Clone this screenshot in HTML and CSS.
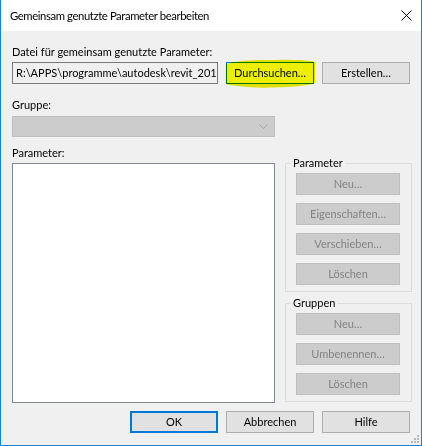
FILE: index.html
```html
<!DOCTYPE html>
<html lang="de">
<head>
<meta charset="utf-8">
<title>Gemeinsam genutzte Parameter bearbeiten</title>
<link rel="stylesheet" href="styles.css">
</head>
<body>
<div class="window">
  <div class="titlebar">
    <span class="title">Gemeinsam genutzte Parameter bearbeiten</span>
    <svg class="close" width="11" height="11" viewBox="0 0 11 11"><path d="M0.5 0.5 L10.5 10.5 M10.5 0.5 L0.5 10.5" stroke="#000" stroke-width="1" fill="none"/></svg>
  </div>
  <div class="content">
    <div class="label l-file">Datei für gemeinsam genutzte Parameter:</div>
    <div class="file-row">
      <div class="field"><span class="field-text">R:\APPS\programme\autodesk\revit_2019</span></div>
      <div class="hl-wrap">
        <button class="btn btn-hl">Durchsuchen…</button>
        <svg class="highlight" width="96" height="30" viewBox="0 0 96 30"><path d="M3 5 C10 2 30 0.5 52 1 C72 0.5 86 1.5 92 3 L92 24 C84 27 66 28 50 28.5 C34 29 20 28 6 26 L3 25 Z" fill="#ecf000"/></svg>
      </div>
      <button class="btn">Erstellen…</button>
    </div>
    <div class="label l-group">Gruppe:</div>
    <div class="combo">
      <svg class="chev" width="9" height="5" viewBox="0 0 9 5"><path d="M0.5 0.5 L4.5 4.5 L8.5 0.5" stroke="#a6a6a6" fill="none"/></svg>
    </div>
    <div class="label l-param">Parameter:</div>
    <div class="main-row">
      <div class="listbox"></div>
      <div class="side">
        <fieldset class="groupbox gb-param">
          <legend>Parameter</legend>
          <button class="btn btn-dis">Neu…</button>
          <button class="btn btn-dis">Eigenschaften…</button>
          <button class="btn btn-dis">Verschieben…</button>
          <button class="btn btn-dis">Löschen</button>
        </fieldset>
        <fieldset class="groupbox gb-groups">
          <legend>Gruppen</legend>
          <button class="btn btn-dis">Neu…</button>
          <button class="btn btn-dis">Umbenennen…</button>
          <button class="btn btn-dis">Löschen</button>
        </fieldset>
      </div>
    </div>
    <div class="footer">
      <button class="btn btn-default">OK</button>
      <button class="btn">Abbrechen</button>
      <button class="btn">Hilfe</button>
    </div>
  </div>
  <svg class="grip" width="9" height="9" viewBox="0 0 9 9">
    <rect x="6" y="0" width="2" height="2" fill="#b8b8b8"/>
    <rect x="3" y="3" width="2" height="2" fill="#b8b8b8"/>
    <rect x="6" y="3" width="2" height="2" fill="#b8b8b8"/>
    <rect x="0" y="6" width="2" height="2" fill="#b8b8b8"/>
    <rect x="3" y="6" width="2" height="2" fill="#b8b8b8"/>
    <rect x="6" y="6" width="2" height="2" fill="#b8b8b8"/>
  </svg>
</div>
</body>
</html>
```
FILE: styles.css
```css
* { box-sizing: border-box; }
html, body { margin: 0; padding: 0; }
body {
  font-family: Lato, "Noto Sans", sans-serif;
  font-size: 11px;
  color: #000;
  background: #f0f0f0;
}
.window {
  position: relative;
  width: 422px;
  height: 446px;
  border: 1px solid #1883d7;
  border-top: none;
  background: #f0f0f0;
  display: flex;
  flex-direction: column;
}
.titlebar {
  height: 31px;
  flex: none;
  background: #fff;
  display: flex;
  align-items: center;
  justify-content: space-between;
  padding: 0 9px 0 9px;
}
.title { font-size: 11.3px; letter-spacing: -0.4px; line-height: 16px; }
.close { display: block; }
.content {
  flex: 1;
  padding: 13px 9px 0 11px;
  display: flex;
  flex-direction: column;
}
.label { line-height: 16px; height: 16px; white-space: nowrap; }
.file-row {
  margin-top: 2px;
  display: flex;
  gap: 8px;
  height: 22px;
}
.field {
  width: 206px;
  flex: none;
  height: 22px;
  border: 1px solid #7a7a7a;
  background: #f0f0f0;
  padding: 0 3px;
  line-height: 20px;
  white-space: nowrap;
  overflow: hidden;
}
.btn {
  font-family: inherit;
  font-size: 11px;
  color: #000;
  width: 88px;
  height: 22px;
  flex: none;
  padding: 0;
  margin: 0;
  border: 1px solid #adadad;
  background: #e1e1e1;
  line-height: 18px;
  text-align: center;
  display: block;
  white-space: nowrap;
}
.hl-wrap { position: relative; width: 88px; height: 22px; flex: none; }
.btn-hl { border-color: #0078d7; background: #ffffff; }
.highlight {
  position: absolute;
  left: -3px;
  top: -3px;
  mix-blend-mode: multiply;
  pointer-events: none;
}
.l-group { margin-top: 13px; }
.combo {
  margin-top: 3px;
  width: 263px;
  height: 21px;
  border: 1px solid #bfbfbf;
  background: #cccccc;
  display: flex;
  align-items: center;
  justify-content: flex-end;
  padding-right: 6px;
}
.chev { display: block; }
.l-param { margin-top: 8px; }
.main-row {
  margin-top: 2px;
  display: flex;
  gap: 10px;
  align-items: flex-start;
}
.listbox {
  width: 263px;
  height: 240px;
  border: 1px solid #828790;
  background: #fff;
}
.side {
  width: 127px;
  margin-top: -8px;
  display: flex;
  flex-direction: column;
  gap: 3px;
}
.groupbox {
  margin: 0;
  padding: 2px 10px 6px 10px;
  border: 1px solid #dcdcdc;
  min-width: 0;
  display: flex;
  flex-direction: column;
  gap: 8px;
}
.groupbox legend {
  padding: 0 2px;
  margin-left: -5px;
  line-height: 16px;
}
.btn-dis {
  width: 104px;
  background: #cccccc;
  border-color: #bfbfbf;
  color: #838383;
}
.footer {
  margin-top: 8px;
  margin-right: 2px;
  display: flex;
  justify-content: flex-end;
  gap: 8px;
}
.btn-default { border: 2px solid #0078d7; line-height: 16px; }
.grip {
  position: absolute;
  right: 1px;
  bottom: 1px;
}
```
